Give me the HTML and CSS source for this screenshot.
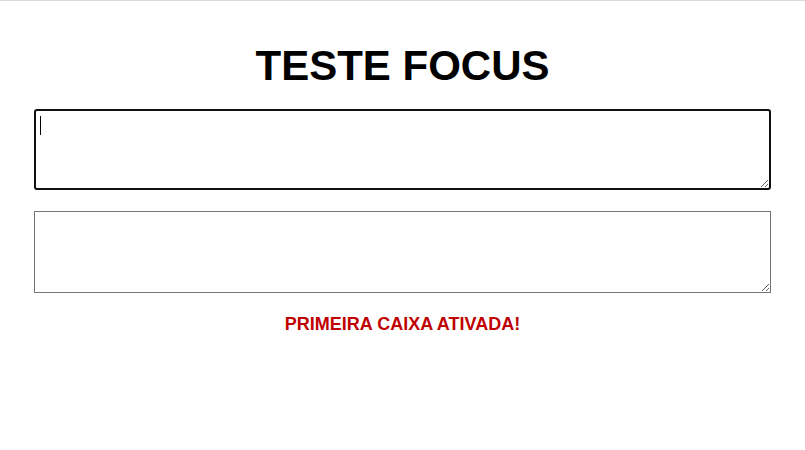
FILE: index.html
```html
<!DOCTYPE html>
<html lang="pt">
<head>
<meta charset="utf-8">
<title>Teste Focus</title>
<link rel="stylesheet" href="styles.css">
</head>
<body>
<div class="topline"></div>
<main class="page">
  <h1 class="title">TESTE FOCUS</h1>
  <div class="field">
    <textarea class="box box-active" autofocus></textarea>
    <span class="caret"></span>
  </div>
  <textarea class="box box-second"></textarea>
  <p class="status">PRIMEIRA CAIXA ATIVADA!</p>
</main>
</body>
</html>
```
FILE: styles.css
```css
html, body {
  margin: 0;
  padding: 0;
  background: #ffffff;
}
body {
  font-family: "Liberation Sans", Arial, sans-serif;
}
.topline {
  height: 1px;
  background: #d9d9de;
}
.page {
  display: flex;
  flex-direction: column;
  padding: 0 34px;
}
.title {
  margin: 41px 0 19px;
  font-size: 42px;
  font-weight: bold;
  line-height: 48px;
  text-align: center;
  color: #000;
}
.field {
  position: relative;
}
.box {
  display: block;
  box-sizing: border-box;
  width: 100%;
  height: 81px;
  margin: 0;
  border: 1px solid #767676;
  border-radius: 0;
  padding: 2px;
  font-family: "Liberation Mono", monospace;
  font-size: 13.33px;
  resize: both;
  background: #fff;
}
.box-second {
  height: 82px;
  margin-top: 21px;
}
.box-active {
  border: 2px solid #101010;
  border-radius: 3px;
  outline: none;
  padding: 4px;
  font-size: 16px;
  caret-color: transparent;
}
.box:focus {
  outline: none;
}
.caret {
  position: absolute;
  left: 6px;
  top: 7px;
  width: 1px;
  height: 19px;
  background: #000;
}
.status {
  margin: 21px 0 0;
  font-size: 18px;
  font-weight: bold;
  text-align: center;
  color: #c00000;
}
```
